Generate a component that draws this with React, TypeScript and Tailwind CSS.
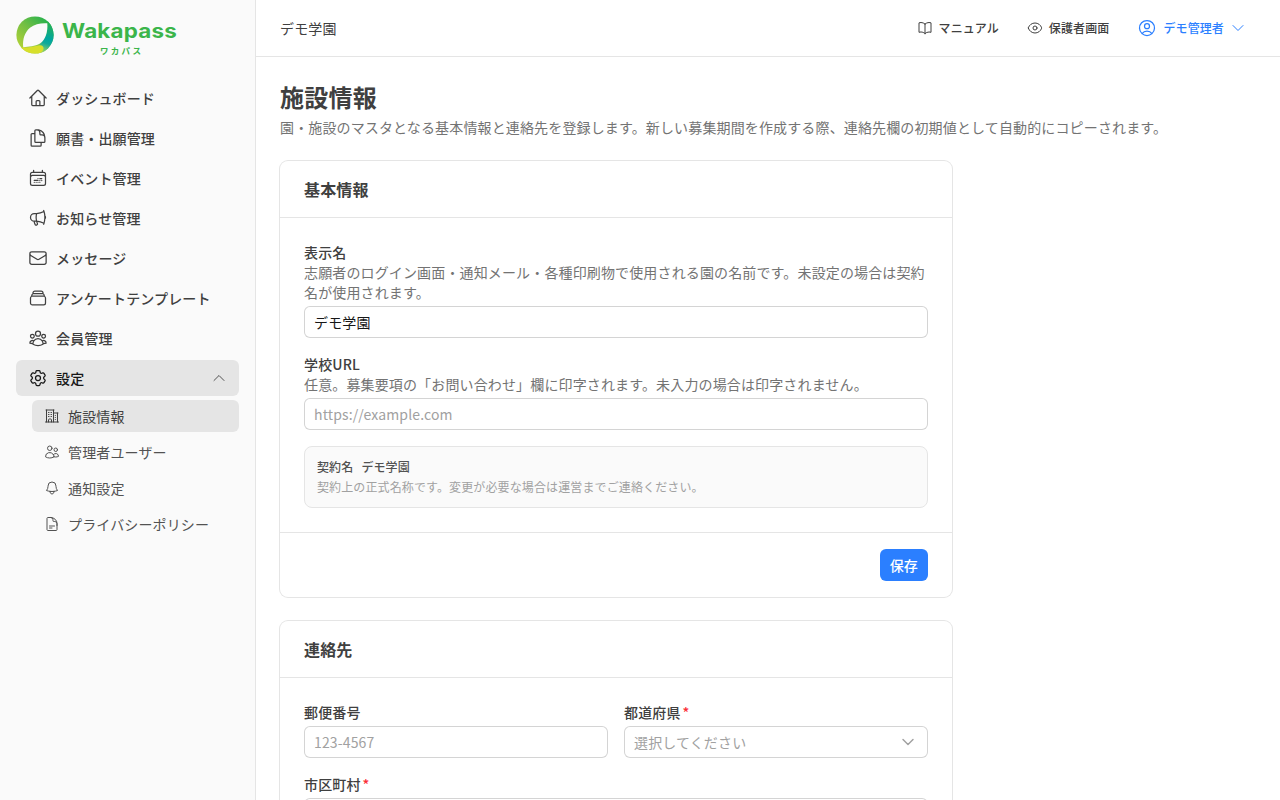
import type { ReactNode } from 'react';
import { ChevronDown } from 'lucide-react';
import {
  HiOutlineBell,
  HiOutlineBookOpen,
  HiOutlineBuildingOffice2,
  HiOutlineCalendarDateRange,
  HiOutlineChevronDown,
  HiOutlineChevronUp,
  HiOutlineCog6Tooth,
  HiOutlineDocumentDuplicate,
  HiOutlineDocumentText,
  HiOutlineEnvelope,
  HiOutlineEye,
  HiOutlineHome,
  HiOutlineMegaphone,
  HiOutlineRectangleStack,
  HiOutlineUserCircle,
  HiOutlineUserGroup,
  HiOutlineUsers,
} from 'react-icons/hi2';

const navItems = [
  { label: 'ダッシュボード', icon: HiOutlineHome },
  { label: '願書・出願管理', icon: HiOutlineDocumentDuplicate },
  { label: 'イベント管理', icon: HiOutlineCalendarDateRange },
  { label: 'お知らせ管理', icon: HiOutlineMegaphone },
  { label: 'メッセージ', icon: HiOutlineEnvelope },
  { label: 'アンケートテンプレート', icon: HiOutlineRectangleStack },
  { label: '会員管理', icon: HiOutlineUserGroup },
];

const settingItems = [
  { label: '施設情報', icon: HiOutlineBuildingOffice2, active: true },
  { label: '管理者ユーザー', icon: HiOutlineUsers, active: false },
  { label: '通知設定', icon: HiOutlineBell, active: false },
  { label: 'プライバシーポリシー', icon: HiOutlineDocumentText, active: false },
];

function Logo() {
  return (
    <svg width="168" height="44" viewBox="0 0 168 44" role="img" aria-label="Wakapass">
      <defs>
        <linearGradient id="ring" gradientUnits="userSpaceOnUse" x1="6" y1="34" x2="30" y2="8">
          <stop offset="0" stopColor="#a8cf38" />
          <stop offset="0.5" stopColor="#72bf44" />
          <stop offset="1" stopColor="#2bb24c" />
        </linearGradient>
        <linearGradient id="shade" gradientUnits="userSpaceOnUse" x1="33" y1="10" x2="23" y2="41">
          <stop offset="0" stopColor="#2bb24c" />
          <stop offset="0.5" stopColor="#00a6a0" />
          <stop offset="0.65" stopColor="#0fa99a" />
          <stop offset="1" stopColor="#b9dc5a" />
        </linearGradient>
        <clipPath id="disc">
          <circle cx="19" cy="23" r="18.6" />
        </clipPath>
      </defs>
      <g clipPath="url(#disc)">
        <rect width="38" height="44" fill="url(#ring)" />
        <path d="M31.500 8L40 8V44H20L24 32C30 26 32 20 31.500 8Z" fill="url(#shade)" />
        <path d="M4 35.500C12 36 18 34.500 23.500 33.200C27.500 32.500 29 37 26 39.500C24 41.500 21 44 17 44H4Z" fill="#d7df2b" />
      </g>
      <path d="M31.300 11.200C32 20 29.500 27.500 24 31.500C19 34.500 13 34.500 7.200 35.200C6.500 27.500 8.500 20.500 14 15.800C18.500 12 25 10.800 31.300 11.200Z" fill="#fafafa" />
      <text x="46" y="26" textLength="115" lengthAdjust="spacingAndGlyphs" fontFamily="Inter, sans-serif" fontWeight="700" fontSize="20" fill="#3bb54a">
        Wakapass
      </text>
      <text x="84" y="41.5" textLength="41" fontFamily="Noto Sans CJK JP, sans-serif" fontWeight="700" fontSize="8.500" fill="#3bb54a">
        ワカパス
      </text>
    </svg>
  );
}

function Sidebar() {
  return (
    <aside className="flex w-64 shrink-0 flex-col border-r border-neutral-200 bg-neutral-50 px-4 pt-3">
      <Logo />
      <nav className="mt-6 flex flex-col gap-1 text-sm font-medium text-neutral-700">
        {navItems.map(({ label, icon: Icon }) => (
          <a key={label} className="flex h-9 items-center gap-2 px-3">
            <Icon className="size-5" />
            {label}
          </a>
        ))}
        <a className="flex h-9 items-center gap-2 rounded-md bg-neutral-200 px-3 text-neutral-900">
          <HiOutlineCog6Tooth className="size-5" />
          <span className="flex-1">設定</span>
          <HiOutlineChevronUp className="size-4 text-neutral-600" />
        </a>
        <div className="flex flex-col gap-1 pl-4 font-normal text-neutral-600">
          {settingItems.map(({ label, icon: Icon, active }) => (
            <a
              key={label}
              className={`flex h-8 items-center gap-2 rounded-md px-3 ${active ? 'bg-neutral-200 text-neutral-700' : ''}`}
            >
              <Icon className="size-4" />
              {label}
            </a>
          ))}
        </div>
      </nav>
    </aside>
  );
}

function Header() {
  return (
    <header className="flex h-[57px] shrink-0 items-center justify-between border-b border-neutral-200 pr-[34px] pl-6">
      <span className="text-sm text-neutral-700">デモ学園</span>
      <div className="flex items-center gap-7 text-xs font-medium text-neutral-700">
        <a className="flex items-center gap-1.5">
          <HiOutlineBookOpen className="size-4" />
          マニュアル
        </a>
        <a className="flex items-center gap-1.5">
          <HiOutlineEye className="size-4" />
          保護者画面
        </a>
        <a className="flex items-center gap-1.5 text-[#2b7fff]">
          <HiOutlineUserCircle className="size-5" />
          デモ管理者
          <HiOutlineChevronDown className="size-4" />
        </a>
      </div>
    </header>
  );
}

function Card({ title, footer, children }: { title: string; footer?: ReactNode; children: ReactNode }) {
  return (
    <section className="w-[672px] rounded-lg bg-white ring-1 ring-neutral-200">
      <h2 className="flex h-14 items-center px-6 text-base font-semibold text-neutral-700">{title}</h2>
      <div className="flex flex-col gap-4 border-t border-neutral-200 p-6">{children}</div>
      {footer && <div className="flex justify-end border-t border-neutral-200 px-6 py-4">{footer}</div>}
    </section>
  );
}

function Field({ label, help, required, children }: { label: string; help?: string; required?: boolean; children: ReactNode }) {
  return (
    <div className="flex-1 text-sm">
      <div className="font-medium text-neutral-700">
        {label}
        {required && <span className="ml-0.5 text-[#fb2c36]">*</span>}
      </div>
      {help && <p className="text-neutral-500">{help}</p>}
      <div className="mt-1">{children}</div>
    </div>
  );
}

const inputClass =
  'block h-8 w-full rounded-md bg-white px-2.5 text-sm text-neutral-900 ring-1 ring-inset ring-neutral-300 placeholder:text-neutral-400 outline-none';

export default function App() {
  return (
    <div
      className="flex h-screen overflow-hidden bg-white font-['Noto_Sans_CJK_JP',sans-serif] **:tracking-[0.01em]"
      lang="ja"
    >
      <Sidebar />
      <div className="flex min-w-0 flex-1 flex-col">
        <Header />
        <main className="flex min-h-0 flex-1 flex-col gap-6 overflow-hidden p-6">
          <div>
            <h1 className="text-2xl font-bold text-neutral-700">施設情報</h1>
            <p className="mt-1 text-sm text-neutral-500">
              園・施設のマスタとなる基本情報と連絡先を登録します。新しい募集期間を作成する際、連絡先欄の初期値として自動的にコピーされます。
            </p>
          </div>

          <Card
            title="基本情報"
            footer={<button className="h-8 rounded-md bg-[#2b7fff] px-2.5 text-sm font-medium text-white">保存</button>}
          >
            <Field
              label="表示名"
              help="志願者のログイン画面・通知メール・各種印刷物で使用される園の名前です。未設定の場合は契約名が使用されます。"
            >
              <input className={inputClass} defaultValue="デモ学園" />
            </Field>
            <Field label="学校URL" help="任意。募集要項の「お問い合わせ」欄に印字されます。未入力の場合は印字されません。">
              <input className={inputClass} placeholder="https://example.com" />
            </Field>
            <div className="rounded-lg border border-neutral-200 bg-neutral-50 p-3 text-xs">
              <div className="flex gap-2 text-neutral-600">
                <span className="font-medium">契約名</span>
                <span className="font-medium">デモ学園</span>
              </div>
              <p className="mt-1 text-neutral-400">契約上の正式名称です。変更が必要な場合は運営までご連絡ください。</p>
            </div>
          </Card>

          <Card title="連絡先">
            <div className="flex gap-4">
              <Field label="郵便番号">
                <input className={inputClass} placeholder="123-4567" />
              </Field>
              <Field label="都道府県" required>
                <button className="flex h-8 w-full items-center justify-between rounded-md px-2.5 text-sm text-neutral-400 ring-1 ring-neutral-300 ring-inset">
                  選択してください
                  <ChevronDown className="size-5" strokeWidth={1.75} />
                </button>
              </Field>
            </div>
            <Field label="市区町村" required>
              <input className={inputClass} />
            </Field>
          </Card>
        </main>
      </div>
    </div>
  );
}
